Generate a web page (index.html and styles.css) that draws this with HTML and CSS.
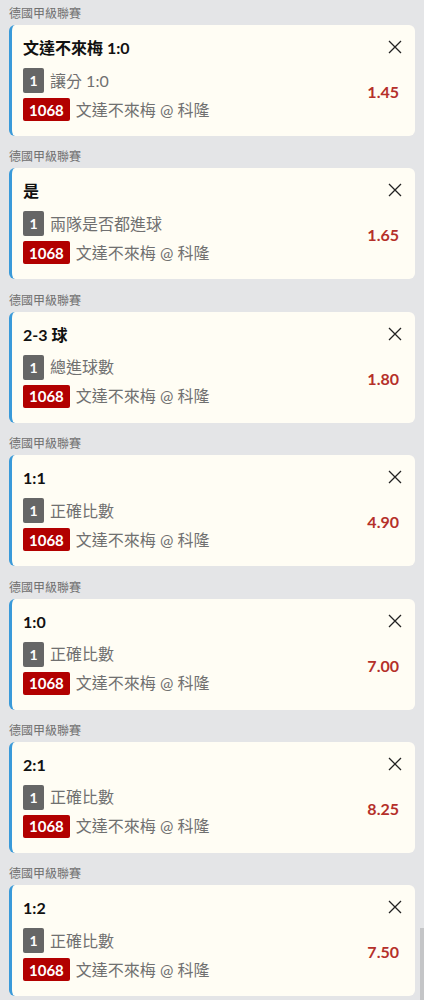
FILE: index.html
```html
<!DOCTYPE html>
<html lang="zh-Hant">
<head>
<meta charset="utf-8">
<link rel="stylesheet" href="styles.css">
</head>
<body>
<div class="list">
  <section class="bet">
    <div class="league">德國甲級聯賽</div>
    <div class="card">
      <div class="main">
        <div class="title">文達不來梅 1:0</div>
        <div class="row"><span class="num">1</span><span class="txt">讓分 1:0</span></div>
        <div class="row"><span class="code">1068</span><span class="txt">文達不來梅 @ 科隆</span></div>
      </div>
      <div class="side">
        <svg class="close" viewBox="0 0 14 14" width="14" height="14"><path d="M1 1L13 13M13 1L1 13" stroke="#222" stroke-width="1.3" fill="none"/></svg>
        <div class="odds">1.45</div>
      </div>
    </div>
  </section>
  <section class="bet">
    <div class="league">德國甲級聯賽</div>
    <div class="card">
      <div class="main">
        <div class="title">是</div>
        <div class="row"><span class="num">1</span><span class="txt">兩隊是否都進球</span></div>
        <div class="row"><span class="code">1068</span><span class="txt">文達不來梅 @ 科隆</span></div>
      </div>
      <div class="side">
        <svg class="close" viewBox="0 0 14 14" width="14" height="14"><path d="M1 1L13 13M13 1L1 13" stroke="#222" stroke-width="1.3" fill="none"/></svg>
        <div class="odds">1.65</div>
      </div>
    </div>
  </section>
  <section class="bet">
    <div class="league">德國甲級聯賽</div>
    <div class="card">
      <div class="main">
        <div class="title">2-3 球</div>
        <div class="row"><span class="num">1</span><span class="txt">總進球數</span></div>
        <div class="row"><span class="code">1068</span><span class="txt">文達不來梅 @ 科隆</span></div>
      </div>
      <div class="side">
        <svg class="close" viewBox="0 0 14 14" width="14" height="14"><path d="M1 1L13 13M13 1L1 13" stroke="#222" stroke-width="1.3" fill="none"/></svg>
        <div class="odds">1.80</div>
      </div>
    </div>
  </section>
  <section class="bet">
    <div class="league">德國甲級聯賽</div>
    <div class="card">
      <div class="main">
        <div class="title">1:1</div>
        <div class="row"><span class="num">1</span><span class="txt">正確比數</span></div>
        <div class="row"><span class="code">1068</span><span class="txt">文達不來梅 @ 科隆</span></div>
      </div>
      <div class="side">
        <svg class="close" viewBox="0 0 14 14" width="14" height="14"><path d="M1 1L13 13M13 1L1 13" stroke="#222" stroke-width="1.3" fill="none"/></svg>
        <div class="odds">4.90</div>
      </div>
    </div>
  </section>
  <section class="bet">
    <div class="league">德國甲級聯賽</div>
    <div class="card">
      <div class="main">
        <div class="title">1:0</div>
        <div class="row"><span class="num">1</span><span class="txt">正確比數</span></div>
        <div class="row"><span class="code">1068</span><span class="txt">文達不來梅 @ 科隆</span></div>
      </div>
      <div class="side">
        <svg class="close" viewBox="0 0 14 14" width="14" height="14"><path d="M1 1L13 13M13 1L1 13" stroke="#222" stroke-width="1.3" fill="none"/></svg>
        <div class="odds">7.00</div>
      </div>
    </div>
  </section>
  <section class="bet">
    <div class="league">德國甲級聯賽</div>
    <div class="card">
      <div class="main">
        <div class="title">2:1</div>
        <div class="row"><span class="num">1</span><span class="txt">正確比數</span></div>
        <div class="row"><span class="code">1068</span><span class="txt">文達不來梅 @ 科隆</span></div>
      </div>
      <div class="side">
        <svg class="close" viewBox="0 0 14 14" width="14" height="14"><path d="M1 1L13 13M13 1L1 13" stroke="#222" stroke-width="1.3" fill="none"/></svg>
        <div class="odds">8.25</div>
      </div>
    </div>
  </section>
  <section class="bet">
    <div class="league">德國甲級聯賽</div>
    <div class="card">
      <div class="main">
        <div class="title">1:2</div>
        <div class="row"><span class="num">1</span><span class="txt">正確比數</span></div>
        <div class="row"><span class="code">1068</span><span class="txt">文達不來梅 @ 科隆</span></div>
      </div>
      <div class="side">
        <svg class="close" viewBox="0 0 14 14" width="14" height="14"><path d="M1 1L13 13M13 1L1 13" stroke="#222" stroke-width="1.3" fill="none"/></svg>
        <div class="odds">7.50</div>
      </div>
    </div>
  </section>
</div>
<div class="scrollbar"></div>
</body>
</html>
```
FILE: styles.css
```css
html, body {
  margin: 0;
  padding: 0;
  background: #e4e5e7;
}
body {
  font-family: Lato, "Noto Sans CJK TC", sans-serif;
  width: 424px;
  height: 1000px;
  overflow: hidden;
  position: relative;
}
.list {
  padding: 0 9px 0 9px;
}
.bet {
  margin-bottom: 7.4px;
}
.league {
  height: 25px;
  box-sizing: border-box;
  padding-top: 5px;
  font-size: 12px;
  line-height: 16px;
  color: #707070;
  font-family: "Noto Sans CJK TC", sans-serif;
}
.card {
  display: flex;
  background: #fffdf4;
  border-left: 3px solid #3a9ad9;
  border-radius: 6px;
  padding: 11px 13px 14px 11px;
  height: 111px;
  box-sizing: border-box;
}
.main {
  flex: 1;
  display: flex;
  flex-direction: column;
}
.title {
  height: 23px;
  line-height: 23px;
  font-size: 16px;
  font-weight: 700;
  color: #111;
  font-family: Lato, "Noto Sans CJK TC", sans-serif;
}
.row {
  display: flex;
  align-items: center;
  margin-top: 9px;
}
.row + .row {
  margin-top: 5px;
}
.num {
  width: 21px;
  height: 25px;
  background: #666;
  color: #fff;
  border-radius: 2px;
  font-weight: 700;
  font-size: 14px;
  display: flex;
  align-items: center;
  justify-content: center;
}
.code {
  height: 23px;
  padding: 0 6px;
  background: #b20000;
  color: #fff;
  border-radius: 2px;
  font-weight: 700;
  font-size: 15px;
  display: flex;
  align-items: center;
}
.txt {
  margin-left: 6px;
  font-size: 16px;
  color: #707070;
  line-height: 22px;
}
.side {
  display: flex;
  flex-direction: column;
  align-items: flex-end;
}
.close {
  margin-top: 4px;
  display: block;
}
.odds {
  margin-top: 28px;
  margin-right: 3px;
  font-size: 16px;
  font-weight: 700;
  color: #b5302a;
  line-height: 20px;
}
.scrollbar {
  position: absolute;
  right: 0;
  top: 928px;
  width: 4px;
  height: 72px;
  background: #c4c5c7;
}
```
